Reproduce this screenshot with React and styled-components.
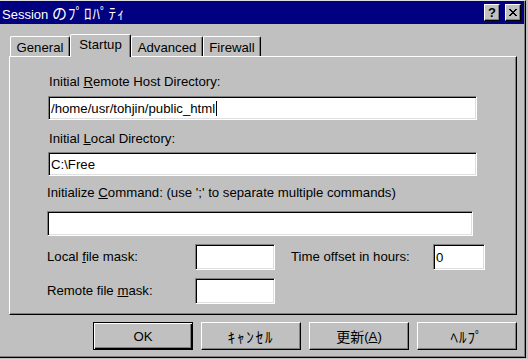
import React from 'react'
import styled, { createGlobalStyle } from 'styled-components'

const GlobalStyle = createGlobalStyle`
  html, body {
    margin: 0;
    padding: 0;
    background: #c0c0c0;
    overflow: hidden;
  }
  body {
    font-family: "Liberation Sans", "Noto Sans CJK JP", sans-serif;
    font-size: 13.2px;
    color: #000;
  }
`

const Window = styled.div`
  box-sizing: border-box;
  width: 526px;
  height: 358px;
  border-top: 1px solid #dfdfdf;
  border-right: 1px solid #000;
  border-bottom: 1px solid #000;
  padding: 0 1px 1px 0;
  box-shadow: inset -1px -1px #808080;
  display: flex;
  flex-direction: column;
`

const TitleBar = styled.div`
  height: 23px;
  background: #000080;
  color: #fff;
  display: flex;
  align-items: center;
  padding: 0 3px 0 2px;
`

const TitleText = styled.div`
  flex: 1;
  font-size: 13px;
  white-space: nowrap;
`

const Jp = styled.span`
  font-family: "Noto Sans CJK JP", sans-serif;
  font-size: ${({ $size }) => $size || 14}px;
  letter-spacing: ${({ $spacing }) => $spacing || 0}px;
`

const CaptionButton = styled.div`
  box-sizing: border-box;
  width: 16px;
  height: 17px;
  margin-left: ${({ $gap }) => $gap || 0}px;
  background: #c0c0c0;
  border-top: 1px solid #fff;
  border-left: 1px solid #fff;
  border-right: 1px solid #000;
  border-bottom: 1px solid #000;
  box-shadow: inset -1px -1px #808080;
  display: flex;
  align-items: center;
  justify-content: center;
  color: #000;
  font-weight: bold;
  font-size: 13px;
`

const Body = styled.div`
  flex: 1;
  display: flex;
  flex-direction: column;
  padding: 10px 7px 0 9px;
`

const TabRow = styled.div`
  display: flex;
  align-items: flex-end;
  height: 22px;
  padding-left: 1px;
`

const Tab = styled.div`
  box-sizing: border-box;
  width: ${({ $width }) => $width}px;
  height: ${({ $active }) => ($active ? 23 : 20)}px;
  margin-bottom: ${({ $active }) => ($active ? -1 : 0)}px;
  position: relative;
  z-index: ${({ $active }) => ($active ? 1 : 0)};
  background: #c0c0c0;
  border-top: 1px solid #fff;
  border-left: 1px solid #fff;
  border-right: 1px solid #000;
  border-radius: 2px 2px 0 0;
  box-shadow: inset -1px 0 #808080;
  display: flex;
  justify-content: center;
  padding-top: ${({ $active }) => ($active ? 2 : 3)}px;
  white-space: nowrap;
`

const Panel = styled.div`
  box-sizing: border-box;
  width: 508px;
  height: 259px;
  border-top: 1px solid #fff;
  border-left: 1px solid #fff;
  border-right: 1px solid #000;
  border-bottom: 1px solid #000;
  box-shadow: inset -1px -1px #808080;
  padding: 18px 0 0 38px;
  display: flex;
  flex-direction: column;
  align-items: flex-start;
`

const Label = styled.div`
  height: 14px;
  line-height: 14px;
  margin-top: ${({ $top }) => $top || 0}px;
  margin-left: ${({ $shift }) => $shift || 0}px;
  white-space: nowrap;
`

const Key = styled.span`
  text-decoration: underline;
  text-underline-offset: 1px;
`

const Field = styled.div`
  box-sizing: border-box;
  width: ${({ $width }) => $width}px;
  height: ${({ $height }) => $height || 24}px;
  margin-top: ${({ $top }) => $top || 0}px;
  margin-left: ${({ $shift }) => $shift || 0}px;
  background: #fff;
  border-top: 1px solid #808080;
  border-left: 1px solid #808080;
  border-right: 1px solid #fff;
  border-bottom: 1px solid #fff;
  box-shadow: inset 1px 1px #000, inset -1px -1px #dfdfdf;
  display: flex;
  align-items: center;
  padding-left: 2px;
  white-space: nowrap;
`

const Caret = styled.span`
  display: inline-block;
  width: 1px;
  height: 15px;
  background: #000;
  margin-left: 1px;
`

const MaskGrid = styled.div`
  margin-top: 8px;
  margin-left: -1px;
  display: grid;
  grid-template-columns: 148px 96px 142px 52px;
  grid-auto-rows: 26px;
  row-gap: 8px;
  align-items: center;
`

const ButtonRow = styled.div`
  display: flex;
  justify-content: flex-end;
  gap: 8px;
  margin-top: 7px;
`

const Button = styled.div`
  box-sizing: border-box;
  width: 100px;
  height: 28px;
  background: #c0c0c0;
  border-top: 1px solid #fff;
  border-left: 1px solid #fff;
  border-right: 1px solid #000;
  border-bottom: 1px solid #000;
  box-shadow: inset -1px -1px #808080;
  display: flex;
  align-items: center;
  justify-content: center;
  white-space: nowrap;
  ${({ $default }) => $default && `
    border: 1px solid #000;
    box-shadow: inset 1px 1px #fff, inset -1px -1px #000, inset -2px -2px #808080;
  `}
`

const CloseIcon = () => (
  <svg width="8" height="7" viewBox="0 0 8 7" shapeRendering="crispEdges">
    <path d="M0 0h2v1h1v1h2v-1h1v-1h2v1h-1v1h-1v1h-1v1h1v1h1v1h1v1h-2v-1h-1v-1h-2v1h-1v1h-2v-1h1v-1h1v-1h1v-1h-1v-1h-1v-1h-1z" fill="#000" />
  </svg>
)

const tabs = [
  { name: 'General', width: 60 },
  { name: 'Startup', width: 61, active: true },
  { name: 'Advanced', width: 72 },
  { name: 'Firewall', width: 58 },
]

export default function App() {
  return (
    <>
      <GlobalStyle />
      <Window>
        <TitleBar>
          <TitleText>
            Session <Jp $size={15} $spacing={1}>のﾌﾟﾛﾊﾟﾃｨ</Jp>
          </TitleText>
          <CaptionButton>?</CaptionButton>
          <CaptionButton $gap={5}><CloseIcon /></CaptionButton>
        </TitleBar>
        <Body>
          <TabRow>
            {tabs.map((tab) => (
              <Tab key={tab.name} $width={tab.width} $active={tab.active}>
                {tab.name}
              </Tab>
            ))}
          </TabRow>
          <Panel>
            <Label $shift={1}>Initial <Key>R</Key>emote Host Directory:</Label>
            <Field $width={429} $top={7}>
              /home/usr/tohjin/public_html<Caret />
            </Field>
            <Label $top={12} $shift={1}>Initial <Key>L</Key>ocal Directory:</Label>
            <Field $width={429} $top={6}>C:\Free</Field>
            <Label $top={10} $shift={-1}>
              Initialize <Key>C</Key>ommand: (use ';' to separate multiple commands)
            </Label>
            <Field $width={426} $height={25} $top={11} $shift={-1} />
            <MaskGrid>
              <Label>Local <Key>f</Key>ile mask:</Label>
              <Field $width={80} $height={26} />
              <Label>Time offset in hours:</Label>
              <Field $width={52} $height={26}>0</Field>
              <Label>Remote file <Key>m</Key>ask:</Label>
              <Field $width={80} $height={26} />
            </MaskGrid>
          </Panel>
          <ButtonRow>
            <Button $default>OK</Button>
            <Button><Jp $size={15} $spacing={1.8}>ｷｬﾝｾﾙ</Jp></Button>
            <Button><Jp>更新</Jp>(<Key>A</Key>)</Button>
            <Button><Jp $size={15} $spacing={1}>ﾍﾙﾌﾟ</Jp></Button>
          </ButtonRow>
        </Body>
      </Window>
    </>
  )
}
